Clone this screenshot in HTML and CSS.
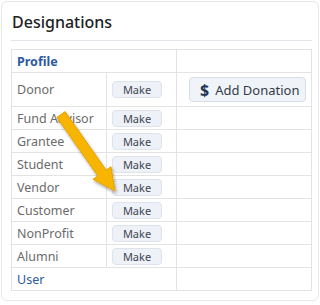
FILE: index.html
```html
<!DOCTYPE html>
<html lang="en">
<head>
    <meta charset="UTF-8">
    <title>Designations</title>
    <link rel="stylesheet" href="styles.css">
</head>
<body>
    <div class="card">
        <h2 class="card-title">Designations</h2>
        <div class="table-wrap">
            <table class="designations">
                <colgroup>
                    <col class="col-name">
                    <col class="col-make">
                    <col class="col-action">
                </colgroup>
                <tr>
                    <td colspan="2" class="group">Profile</td>
                    <td></td>
                </tr>
                <tr class="tall">
                    <td class="label">Donor</td>
                    <td><button class="make">Make</button></td>
                    <td><button class="donate"><span class="dollar">$</span>Add Donation</button></td>
                </tr>
                <tr>
                    <td class="label">Fund Advisor</td>
                    <td><button class="make">Make</button></td>
                    <td></td>
                </tr>
                <tr>
                    <td class="label">Grantee</td>
                    <td><button class="make">Make</button></td>
                    <td></td>
                </tr>
                <tr>
                    <td class="label">Student</td>
                    <td><button class="make">Make</button></td>
                    <td></td>
                </tr>
                <tr>
                    <td class="label">Vendor</td>
                    <td><button class="make">Make</button></td>
                    <td></td>
                </tr>
                <tr>
                    <td class="label">Customer</td>
                    <td><button class="make">Make</button></td>
                    <td></td>
                </tr>
                <tr>
                    <td class="label">NonProfit</td>
                    <td><button class="make">Make</button></td>
                    <td></td>
                </tr>
                <tr>
                    <td class="label">Alumni</td>
                    <td><button class="make">Make</button></td>
                    <td></td>
                </tr>
                <tr>
                    <td colspan="2" class="group user">User</td>
                    <td></td>
                </tr>
            </table>
            <svg class="arrow" width="80" height="100" viewBox="0 0 80 100">
                <defs>
                    <filter id="shadow" x="-30%" y="-30%" width="160%" height="160%">
                        <feDropShadow dx="1" dy="2" stdDeviation="1.5" flood-color="#000" flood-opacity="0.35"/>
                    </filter>
                </defs>
                <!-- arrow from upper left down to the Vendor "Make" button -->
                <polygon filter="url(#shadow)" fill="#f7b500" stroke="#e6a200" stroke-width="1" stroke-linejoin="round"
                    points="5.9,15.4 14.1,9.6 55.1,68.1 60,64.7 64,89 42,77.3 46.9,73.9"/>
            </svg>
        </div>
    </div>
</body>
</html>
```

FILE: styles.css
```css
body {
    margin: 0;
    background-color: #ffffff;
    font-family: "Noto Sans", "Open Sans", sans-serif;
}

.card {
    margin: 1px 1px 0 1px;
    height: 300px;
    box-sizing: border-box;
    border: 1px solid #e4e6ea;
    border-radius: 6px;
    padding: 0 6px 0 9px;
}

.card-title {
    margin: 0;
    padding: 11px 0 8px 1px;
    font-size: 16px;
    font-weight: 500;
    line-height: 19px;
    color: #222222;
    border-bottom: 1px solid #e2e5ea;
}

.table-wrap {
    position: relative;
    margin-top: 8px;
}

.designations {
    width: 301px;
    border-collapse: collapse;
    table-layout: fixed;
    font-size: 12.5px;
}

.col-name {
    width: 95px;
}

.col-make {
    width: 70px;
}

.designations td {
    border: 1px solid #e3e3e3;
    height: 22px;
    padding: 0 0 0 5px;
    vertical-align: middle;
    white-space: nowrap;
}

.designations tr.tall td {
    height: 33px;
}

.label {
    color: #6b6b6b;
}

.group {
    color: #2c5aa0;
    font-weight: 700;
}

.group.user {
    font-weight: 400;
}

.make {
    display: block;
    width: 50px;
    height: 17px;
    padding: 0;
    border: 1px solid #dce3ec;
    border-radius: 4px;
    background-color: #eef2f8;
    font-family: inherit;
    font-size: 11px;
    line-height: 15px;
    color: #3d4552;
}

.donate {
    display: flex;
    align-items: center;
    margin-left: 7px;
    width: 117px;
    height: 25px;
    padding: 0 0 0 10px;
    border: 1px solid #d6dee9;
    border-radius: 4px;
    background-color: #f0f4f9;
    font-family: inherit;
    font-size: 13px;
    color: #333a45;
}

.dollar {
    font-size: 16px;
    font-weight: 700;
    color: #1f3658;
    margin-right: 6px;
}

.arrow {
    position: absolute;
    left: 40px;
    top: 53px;
    pointer-events: none;
}
```
